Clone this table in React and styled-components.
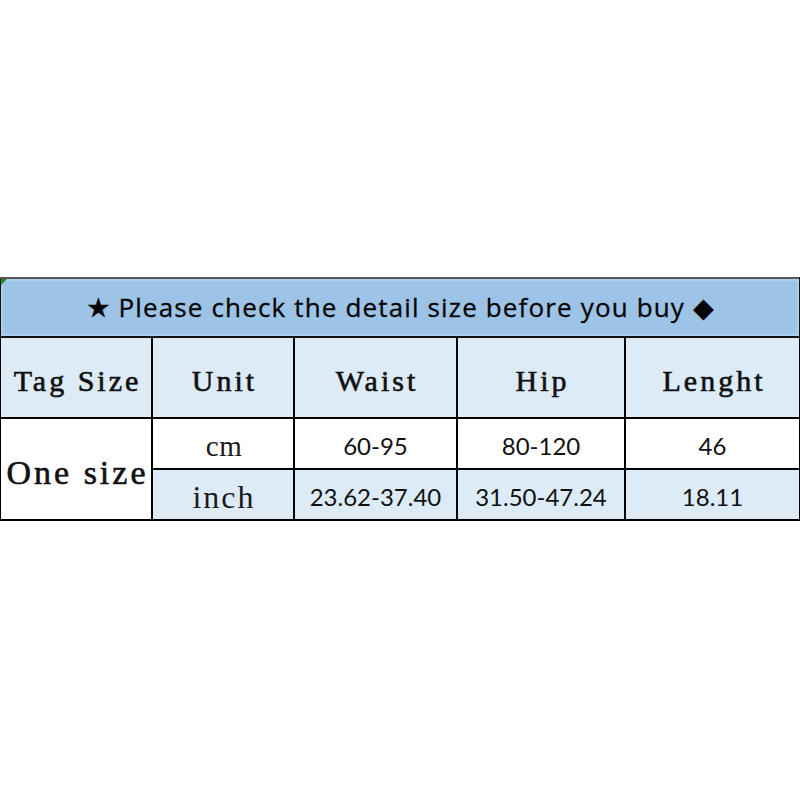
import React from "react";
import styled, { createGlobalStyle } from "styled-components";

const Global = createGlobalStyle`
  html, body { margin: 0; padding: 0; background: #ffffff; }
`;

const Page = styled.div`
  box-sizing: border-box;
  width: 800px;
  height: 800px;
  padding-bottom: 3px;
  display: flex;
  align-items: center;
  justify-content: center;
  background: #ffffff;
`;

const Table = styled.table`
  width: 800px;
  border-collapse: collapse;
  table-layout: fixed;
`;

const TitleCell = styled.th`
  position: relative;
  height: 57px;
  padding: 0;
  background: #9dc3e6;
  border: 2px solid #111;
  border-top: 2px solid #555;
  box-shadow: inset 0 0 0 2px #b0cfee;
  font-family: "Open Sans", "Noto Sans", "Liberation Sans", sans-serif;
  font-weight: 400;
  font-size: 26px;
  letter-spacing: 1.15px;
  color: #050505;
  -webkit-text-stroke: 0.3px #050505;
  text-align: center;
  white-space: nowrap;
  &::before {
    content: "";
    position: absolute;
    left: 0;
    top: 0;
    border-top: 6px solid #1a8a1a;
    border-right: 6px solid transparent;
  }
`;

const Glyph = styled.span`
  font-family: "DejaVu Sans", sans-serif;
  font-size: 27px;
  letter-spacing: 0;
`;

const serif = `"Liberation Serif", "DejaVu Serif", serif`;

const HeadCell = styled.th`
  height: 71px;
  padding: 8px 0 0 3px;
  background: #ddebf7;
  border: 2px solid #000;
  font-family: ${serif};
  font-weight: 400;
  font-size: 30px;
  letter-spacing: 3px;
  -webkit-text-stroke: 0.6px #111;
  color: #111;
  text-align: center;
  white-space: nowrap;
`;

const SizeCell = styled.td`
  padding: 8px 0 0 3px;
  background: #ffffff;
  border: 2px solid #000;
  font-family: ${serif};
  font-weight: 400;
  font-size: 34px;
  letter-spacing: 3px;
  -webkit-text-stroke: 0.6px #111;
  color: #111;
  text-align: center;
  white-space: nowrap;
`;

const UnitCell = styled.td`
  height: 43px;
  padding: 6px 0 0 2px;
  background: ${(p) => (p.$shade ? "#ddebf7" : "#ffffff")};
  border: 2px solid #000;
  font-family: ${serif};
  font-size: ${(p) => p.$size}px;
  letter-spacing: ${(p) => p.$ls}px;
  color: #1a1a1a;
  text-align: center;
  white-space: nowrap;
`;

const ValueCell = styled.td`
  height: 45px;
  padding: 4px 0 0;
  background: ${(p) => (p.$shade ? "#ddebf7" : "#ffffff")};
  border: 2px solid #000;
  font-family: "Lato", "Noto Sans", sans-serif;
  font-size: 24px;
  color: #111;
  text-align: center;
`;

const cols = [152, 142, 163, 168, 175];

const heads = ["Tag Size", "Unit", "Waist", "Hip", "Lenght"];

const rows = [
  { unit: "cm", size: 29, ls: 0.5, vals: ["60-95", "80-120", "46"], shade: false },
  { unit: "inch", size: 32, ls: 2, vals: ["23.62-37.40", "31.50-47.24", "18.11"], shade: true },
];

export default function App() {
  return (
    <>
      <Global />
      <Page>
        <Table>
          <colgroup>
            {cols.map((w, i) => (
              <col key={i} style={{ width: w }} />
            ))}
          </colgroup>
          <thead>
            <tr>
              <TitleCell colSpan={5}>
                <Glyph>★</Glyph> Please check the detail size before you buy <Glyph>◆</Glyph>
              </TitleCell>
            </tr>
            <tr>
              {heads.map((h) => (
                <HeadCell key={h}>{h}</HeadCell>
              ))}
            </tr>
          </thead>
          <tbody>
            {rows.map((r, i) => (
              <tr key={r.unit}>
                {i === 0 && <SizeCell rowSpan={2}>One size</SizeCell>}
                <UnitCell $shade={r.shade} $size={r.size} $ls={r.ls}>
                  {r.unit}
                </UnitCell>
                {r.vals.map((v) => (
                  <ValueCell key={v} $shade={r.shade}>
                    {v}
                  </ValueCell>
                ))}
              </tr>
            ))}
          </tbody>
        </Table>
      </Page>
    </>
  );
}
